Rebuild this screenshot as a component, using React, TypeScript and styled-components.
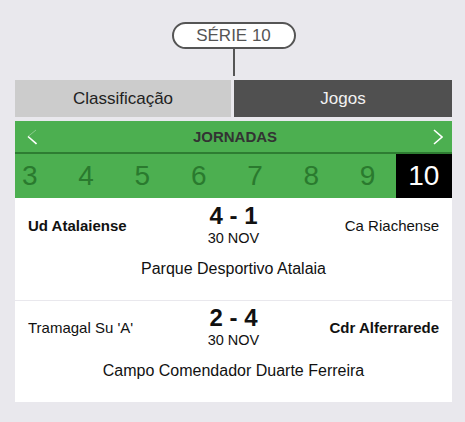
import React from "react";
import styled, { createGlobalStyle } from "styled-components";

const Global = createGlobalStyle`
  html, body { margin: 0; padding: 0; background: #e9e8ed; }
  body { font-family: "Liberation Sans", Arial, sans-serif; }
`;

const Page = styled.div`
  width: 465px;
  height: 422px;
  padding: 22px 13px 0 15px;
  box-sizing: border-box;
  display: flex;
  flex-direction: column;
`;

const SeriesHead = styled.div`
  display: flex;
  flex-direction: column;
  align-items: center;
`;

const Pill = styled.div`
  width: 124px;
  height: 27px;
  box-sizing: border-box;
  border: 2px solid #555;
  border-radius: 14px;
  background: #fff;
  color: #555;
  font-size: 17px;
  display: flex;
  align-items: center;
  justify-content: center;
  line-height: 1;
`;

const Stem = styled.div`
  width: 2px;
  height: 27px;
  background: #555;
`;

const Tabs = styled.div`
  display: grid;
  grid-template-columns: 216px 218px;
  column-gap: 3px;
  margin-top: 4px;
`;

const Tab = styled.div<{ $active?: boolean }>`
  height: 37px;
  display: flex;
  align-items: center;
  justify-content: center;
  font-size: 17px;
  background: ${(p) => (p.$active ? "#505050" : "#cccccc")};
  color: ${(p) => (p.$active ? "#f2f2f2" : "#222")};
`;

const Rounds = styled.div`
  margin-top: 4px;
  background: #4caf50;
`;

const RoundsHeader = styled.div`
  height: 31px;
  display: flex;
  align-items: center;
  justify-content: space-between;
  padding: 0 9px 0 12px;
  border-bottom: 2px solid #2e7d32;
`;

const RoundsTitle = styled.div`
  font-weight: bold;
  font-size: 15px;
  color: #333;
`;

const Arrow = styled.svg`
  width: 10px;
  height: 16px;
  display: block;
`;

const NumStrip = styled.div`
  height: 44px;
  display: flex;
  justify-content: flex-end;
  overflow: hidden;
`;

const Num = styled.div<{ $active?: boolean }>`
  flex: 0 0 56.3px;
  display: flex;
  align-items: center;
  justify-content: center;
  font-size: 28px;
  color: ${(p) => (p.$active ? "#fff" : "#2a7a2e")};
  background: ${(p) => (p.$active ? "#000" : "transparent")};
`;

const Match = styled.div<{ $last?: boolean }>`
  background: #fff;
  height: ${(p) => (p.$last ? "101px" : "103px")};
  box-sizing: border-box;
  border-bottom: ${(p) => (p.$last ? "none" : "1px solid #e9e8ed")};
  padding: ${(p) => (p.$last ? "4px" : "5px")} 13px 0 13px;
  display: flex;
  flex-direction: column;
`;

const MatchRow = styled.div`
  display: grid;
  grid-template-columns: 1fr auto 1fr;
  align-items: center;
`;

const Team = styled.div<{ $winner?: boolean; $right?: boolean }>`
  font-size: 15px;
  padding-top: 2px;
  font-weight: ${(p) => (p.$winner ? "bold" : "normal")};
  text-align: ${(p) => (p.$right ? "right" : "left")};
  color: #111;
`;

const ScoreBox = styled.div`
  display: flex;
  flex-direction: column;
  align-items: center;
`;

const Score = styled.div`
  font-size: 24px;
  font-weight: bold;
  line-height: 26px;
  color: #111;
`;

const DateText = styled.div`
  margin-top: 1px;
  font-size: 14.5px;
  line-height: 16px;
  color: #111;
`;

const Venue = styled.div`
  margin-top: 14px;
  text-align: center;
  font-size: 16px;
  color: #111;
`;

const matches = [
  { home: "Ud Atalaiense", away: "Ca Riachense", score: "4 - 1", date: "30 NOV", venue: "Parque Desportivo Atalaia", winner: "home" },
  { home: "Tramagal Su 'A'", away: "Cdr Alferrarede", score: "2 - 4", date: "30 NOV", venue: "Campo Comendador Duarte Ferreira", winner: "away" },
];

export default function App() {
  return (
    <>
      <Global />
      <Page>
        <SeriesHead>
          <Pill>SÉRIE 10</Pill>
          <Stem />
        </SeriesHead>
        <Tabs>
          <Tab>Classificação</Tab>
          <Tab $active>Jogos</Tab>
        </Tabs>
        <Rounds>
          <RoundsHeader>
            <Arrow viewBox="0 0 10 16">
              <path d="M9 1 L1 7.5" stroke="#fff" strokeOpacity="0.35" strokeWidth="1" fill="none" />
              <path d="M1 7.5 L9.5 15" stroke="#fff" strokeWidth="1.6" fill="none" />
            </Arrow>
            <RoundsTitle>JORNADAS</RoundsTitle>
            <Arrow viewBox="0 0 10 16">
              <path d="M1 1 L9 8 L1 15" stroke="#fff" strokeWidth="1.6" fill="none" />
            </Arrow>
          </RoundsHeader>
          <NumStrip>
            {[3, 4, 5, 6, 7, 8, 9, 10].map((n) => (
              <Num key={n} $active={n === 10}>{n}</Num>
            ))}
          </NumStrip>
        </Rounds>
        {matches.map((m, i) => (
          <Match key={i} $last={i === matches.length - 1}>
            <MatchRow>
              <Team $winner={m.winner === "home"}>{m.home}</Team>
              <ScoreBox>
                <Score>{m.score}</Score>
                <DateText>{m.date}</DateText>
              </ScoreBox>
              <Team $right $winner={m.winner === "away"}>{m.away}</Team>
            </MatchRow>
            <Venue>{m.venue}</Venue>
          </Match>
        ))}
      </Page>
    </>
  );
}
